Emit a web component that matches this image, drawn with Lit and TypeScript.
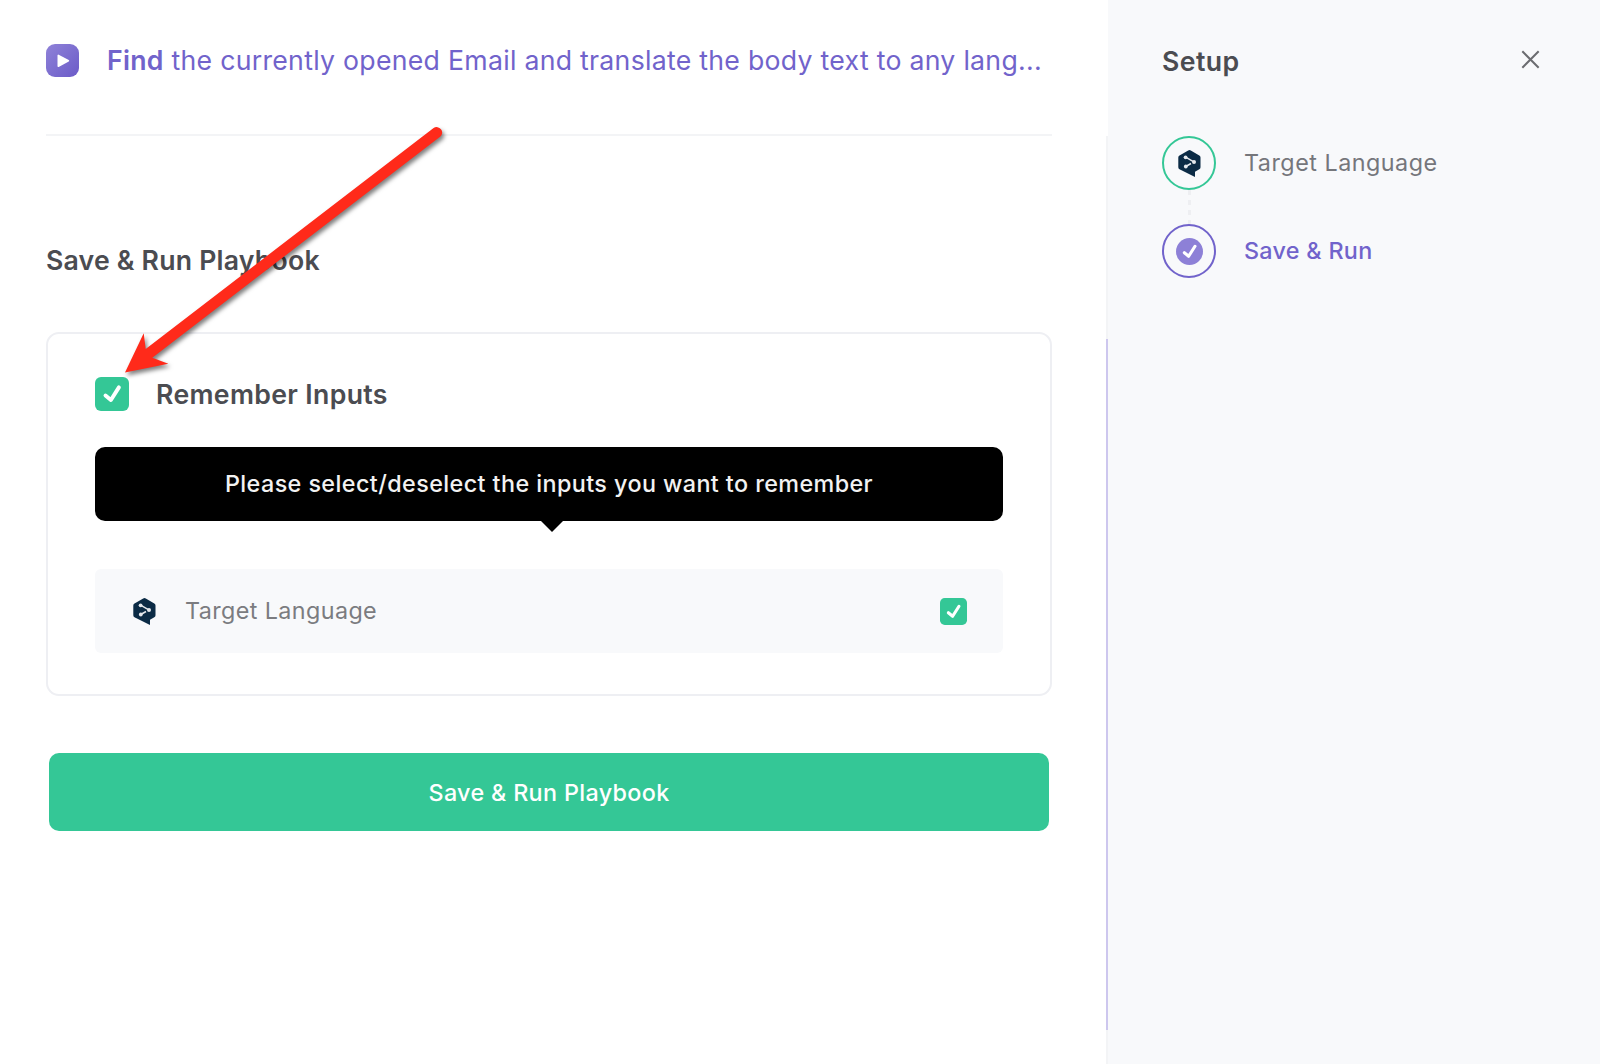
import { css, CSSResultGroup, html, LitElement, svg, TemplateResult } from "lit";
import { customElement, property } from "lit/decorators.js";

const languageLogo = html`
  <svg class="logo" viewBox="0 0 23 27">
    <path
      fill="#0b2b45"
      d="M10.2 .5a2.6 2.6 0 0 1 2.6 0l8.5 4.9a2.4 2.4 0 0 1 1.2 2.1v9.6a2.4 2.4 0 0 1-1.2 2.1L17 21.8v5.2L1.5 19.2A2.4 2.4 0 0 1 .3 17.1V7.5a2.4 2.4 0 0 1 1.2-2.1z"
    />
    <path
      d="M7.6 7.2l8.2 4.7M7.8 16.5l5.2-3"
      fill="none"
      stroke="#e4e8ec"
      stroke-width="1.5"
    />
    <g fill="#e4e8ec">
      <circle cx="7.6" cy="7.3" r="1.9" />
      <circle cx="16" cy="11.9" r="2" />
      <circle cx="7.8" cy="16.5" r="1.9" />
    </g>
  </svg>
`;

@customElement("check-mark")
export class CheckMark extends LitElement {
  @property() shape: "box" | "circle" = "box";

  protected render(): TemplateResult {
    return html`
      <svg viewBox="0 0 34 34">
        ${this.shape === "box"
          ? svg`<rect width="34" height="34" rx="6" />`
          : svg`<circle cx="17" cy="17" r="17" />`}
        <path d="M10.5 18.5l5.4 4.5L23.9 10.4" />
      </svg>
    `;
  }

  static get styles(): CSSResultGroup {
    return css`
      :host {
        display: block;
        flex: none;
        width: 34px;
        height: 34px;
        color: #34c796;
      }
      svg {
        display: block;
        width: 100%;
        height: 100%;
        fill: currentcolor;
      }
      path {
        fill: none;
        stroke: #fff;
        stroke-width: 3.9;
        stroke-linecap: round;
        stroke-linejoin: round;
      }
    `;
  }
}

@customElement("app-root")
export class AppRoot extends LitElement {
  protected render(): TemplateResult {
    return html`
      <main>
        <header>
          <svg class="play" viewBox="0 0 33 33">
            <defs>
              <linearGradient id="play-fill" x1="0" y1="0" x2="1" y2="1">
                <stop offset="0" stop-color="#8f82d8" />
                <stop offset="1" stop-color="#6b5bc8" />
              </linearGradient>
            </defs>
            <rect width="33" height="33" rx="9" fill="url(#play-fill)" />
            <path
              d="M12.3 11.4v10.8L22.4 16.8z"
              fill="#fff"
              stroke="#fff"
              stroke-width="1.6"
              stroke-linejoin="round"
            />
          </svg>
          <div class="title">
            <b>Find</b> the currently opened Email and translate the body text
            to any lang...
          </div>
        </header>
        <h2>Save &amp; Run Playbook</h2>
        <section class="card">
          <div class="remember">
            <check-mark></check-mark>
            <span>Remember Inputs</span>
          </div>
          <div class="hint">
            <span>Please select/deselect the inputs you want to remember</span>
          </div>
          <div class="input-row">
            ${languageLogo}
            <span>Target Language</span>
            <check-mark class="small"></check-mark>
          </div>
        </section>
        <button>Save &amp; Run Playbook</button>
      </main>
      <aside>
        <div class="rail"><i></i></div>
        <div class="setup">
          <div class="setup-head">
            <span>Setup</span>
            <svg class="close" viewBox="0 0 20 20">
              <path d="M1.4 1.4l17.2 17.2M18.6 1.4L1.4 18.6" />
            </svg>
          </div>
          <div class="step done">
            <div class="ring">${languageLogo}</div>
            <span>Target Language</span>
          </div>
          <svg class="link" viewBox="0 0 3 34">
            <path d="M1.5 0v34" />
          </svg>
          <div class="step active">
            <div class="ring"><check-mark shape="circle"></check-mark></div>
            <span>Save &amp; Run</span>
          </div>
        </div>
      </aside>
      <svg class="arrow" viewBox="0 0 340 260">
        <path
          d="M15 252.5L33.7 213.3L35.7 229L323.6 8a5.5 5.5 0 0 1 6.8 8.6L42.3 237.7L58.3 243.7z"
        />
      </svg>
    `;
  }

  static get styles(): CSSResultGroup {
    return css`
      :host {
        position: relative;
        display: flex;
        width: 1600px;
        height: 1064px;
        overflow: hidden;
        background: #fff;
        color: #4b4c51;
        font-family: Inter, "Liberation Sans", sans-serif;
        font-size: 23.33px;
        line-height: 30px;
      }
      * {
        box-sizing: border-box;
      }
      svg {
        display: block;
        flex: none;
      }
      main {
        display: flex;
        flex-direction: column;
        width: 1106px;
        padding: 0 54px 0 46px;
      }
      header {
        display: flex;
        align-items: center;
        gap: 28px;
        height: 136px;
        padding-bottom: 13px;
        border-bottom: 2px solid #f3f4f6;
      }
      .play {
        width: 33px;
        height: 33px;
      }
      .title {
        padding-bottom: 2px;
        color: #7163cb;
        font-size: 26.67px;
        letter-spacing: 0.28px;
        white-space: nowrap;
      }
      .title b {
        font-weight: 600;
      }
      h2 {
        margin: 108px 0 0;
        font-size: 26.67px;
        font-weight: 600;
        line-height: 32px;
        letter-spacing: 0.2px;
      }
      .card {
        height: 364px;
        margin-top: 56px;
        padding: 42px 47px;
        border: 2px solid #eeeff3;
        border-radius: 13px;
      }
      .remember {
        display: flex;
        align-items: center;
        gap: 27px;
        margin-top: 1px;
        font-size: 26.67px;
        font-weight: 600;
        line-height: 34px;
        letter-spacing: 0.34px;
      }
      .hint {
        display: flex;
        flex-direction: column;
        align-items: center;
        height: 74px;
        margin-top: 36px;
        padding-top: 22px;
        border-radius: 10px;
        background: #000;
        color: #f2f2f2;
        font-weight: 500;
        letter-spacing: 0.42px;
      }
      .hint::after {
        content: "";
        margin: 22px 0 0 6px;
        border: 11px solid transparent;
        border-top-color: #000;
        border-bottom: 0;
      }
      .input-row {
        display: flex;
        align-items: center;
        height: 84px;
        margin-top: 48px;
        padding: 0 36px 0 37.5px;
        border-radius: 6px;
        background: #f8f9fb;
        color: #7b7c80;
        letter-spacing: 0.4px;
      }
      .input-row span {
        flex: 1;
        margin-left: 29.5px;
      }
      .logo {
        width: 23px;
        height: 27px;
      }
      .small {
        width: 27px;
        height: 27px;
      }
      button {
        height: 78px;
        margin: 57px 3px 0;
        padding: 2px 0 0;
        border: 0;
        border-radius: 10px;
        background: #34c796;
        color: #fff;
        font: inherit;
        font-weight: 500;
        letter-spacing: 0.34px;
      }
      aside {
        display: flex;
        flex: 1;
      }
      .rail {
        width: 2px;
        height: 928px;
        margin-top: 136px;
        padding-top: 203px;
        background: #f3f4f6;
      }
      .rail i {
        display: block;
        height: 691px;
        background: #cdc7ee;
      }
      .setup {
        flex: 1;
        padding: 45px 60px 0 54px;
        background: #f8f9fb;
      }
      .setup-head {
        display: flex;
        justify-content: space-between;
        height: 91px;
        font-size: 26.67px;
        font-weight: 600;
        line-height: 32px;
        letter-spacing: 0.4px;
      }
      .close {
        width: 19px;
        height: 19px;
        margin-top: 5px;
        fill: none;
        stroke: #6b6c70;
        stroke-width: 2.1;
      }
      .step {
        display: flex;
        align-items: center;
        gap: 28px;
        color: #75767b;
        letter-spacing: 0.5px;
      }
      .ring {
        display: flex;
        align-items: center;
        justify-content: center;
        width: 54px;
        height: 54px;
        border: 2px solid #34c796;
        border-radius: 50%;
      }
      .active {
        color: #7163cb;
        font-weight: 500;
        letter-spacing: 0.3px;
      }
      .active .ring {
        border-color: #7163cb;
      }
      .ring check-mark {
        width: 27px;
        height: 27px;
        color: #8d80d7;
      }
      .link {
        width: 3px;
        height: 34px;
        margin-left: 25.5px;
        stroke: #eeeff2;
        stroke-width: 3;
        stroke-dasharray: 5 5;
      }
      .arrow {
        position: absolute;
        left: 110px;
        top: 120px;
        width: 340px;
        height: 260px;
        fill: #ff2a1a;
        filter: drop-shadow(2px 3px 2px rgba(0, 0, 0, 0.5));
      }
    `;
  }
}
declare global {
  interface HTMLElementTagNameMap {
    "app-root": AppRoot;
    "check-mark": CheckMark;
  }
}
